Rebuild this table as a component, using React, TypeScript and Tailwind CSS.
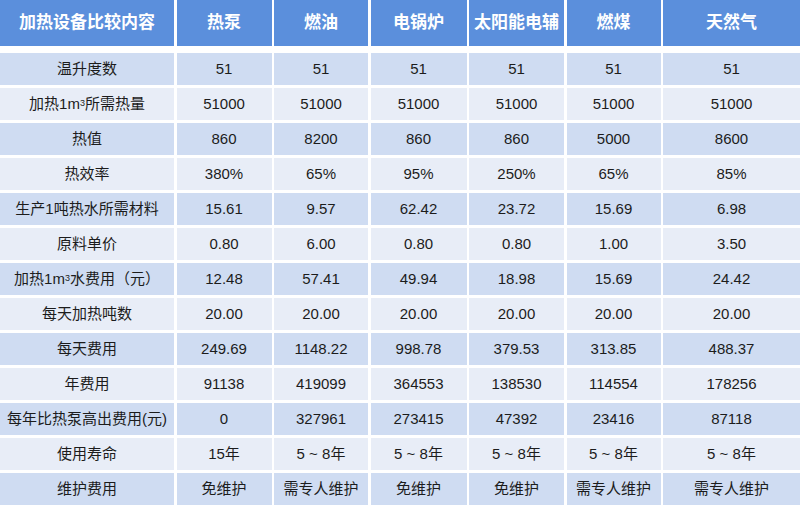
import React from "react";

const headers = ["加热设备比较内容", "热泵", "燃油", "电锅炉", "太阳能电辅", "燃煤", "天然气"];

const rows: { label: React.ReactNode; values: string[] }[] = [
  { label: "温升度数", values: ["51", "51", "51", "51", "51", "51"] },
  {
    label: (
      <>
        加热1m<sup className="text-[9px] relative -top-[1px]">3</sup>所需热量
      </>
    ),
    values: ["51000", "51000", "51000", "51000", "51000", "51000"],
  },
  { label: "热值", values: ["860", "8200", "860", "860", "5000", "8600"] },
  { label: "热效率", values: ["380%", "65%", "95%", "250%", "65%", "85%"] },
  { label: "生产1吨热水所需材料", values: ["15.61", "9.57", "62.42", "23.72", "15.69", "6.98"] },
  { label: "原料单价", values: ["0.80", "6.00", "0.80", "0.80", "1.00", "3.50"] },
  {
    label: (
      <>
        加热1m<sup className="text-[9px] relative -top-[1px]">3</sup>水费用（元）
      </>
    ),
    values: ["12.48", "57.41", "49.94", "18.98", "15.69", "24.42"],
  },
  { label: "每天加热吨数", values: ["20.00", "20.00", "20.00", "20.00", "20.00", "20.00"] },
  { label: "每天费用", values: ["249.69", "1148.22", "998.78", "379.53", "313.85", "488.37"] },
  { label: "年费用", values: ["91138", "419099", "364553", "138530", "114554", "178256"] },
  { label: "每年比热泵高出费用(元)", values: ["0", "327961", "273415", "47392", "23416", "87118"] },
  { label: "使用寿命", values: ["15年", "5 ~ 8年", "5 ~ 8年", "5 ~ 8年", "5 ~ 8年", "5 ~ 8年"] },
  { label: "维护费用", values: ["免维护", "需专人维护", "免维护", "免维护", "需专人维护", "需专人维护"] },
];

const cols = "grid grid-cols-[174px_95px_94px_96px_95px_94px_1fr] gap-x-[2.5px]";

export default function App() {
  return (
    <div
      className="w-[800px] h-[513px] bg-white overflow-hidden"
      style={{ fontFamily: '"Liberation Sans", "Noto Sans CJK SC", sans-serif' }}
    >
      {/* Header */}
      <div className={`${cols} h-[46px]`}>
        {headers.map((h) => (
          <div
            key={h}
            className="bg-[#5b8fdc] text-white font-bold text-[17px] flex items-center justify-center"
          >
            {h}
          </div>
        ))}
      </div>

      {/* Body */}
      <div className="mt-[7px] flex flex-col gap-y-[3px]">
        {rows.map((r, i) => {
          const bg = i % 2 === 0 ? "bg-[#cfdcf2]" : "bg-[#e8edf7]";
          return (
            <div key={i} className={`${cols} h-[32px] text-[15px] text-[#1c1c1c]`}>
              <div className={`${bg} flex items-center justify-center whitespace-nowrap`}>{r.label}</div>
              {r.values.map((v, j) => (
                <div key={j} className={`${bg} flex items-center justify-center whitespace-nowrap`}>
                  {v}
                </div>
              ))}
            </div>
          );
        })}
      </div>
    </div>
  );
}
